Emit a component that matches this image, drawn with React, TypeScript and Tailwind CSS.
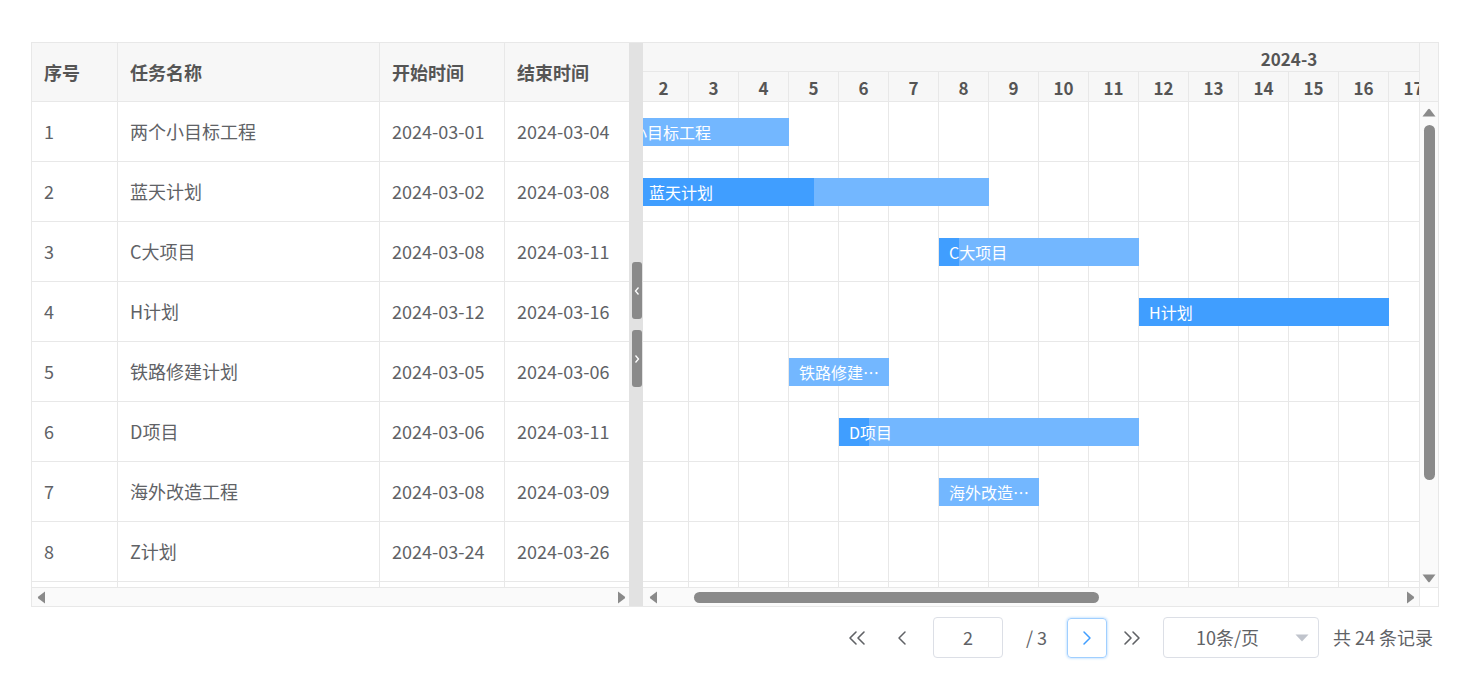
import React from 'react';
import { ChevronLeft, ChevronRight } from 'lucide-react';

interface Task {
  id: number;
  name: string;
  start: string;
  end: string;
  progress: number;
}

const tasks: Task[] = [
  { id: 1, name: '两个小目标工程', start: '2024-03-01', end: '2024-03-04', progress: 0 },
  { id: 2, name: '蓝天计划', start: '2024-03-02', end: '2024-03-08', progress: 50 },
  { id: 3, name: 'C大项目', start: '2024-03-08', end: '2024-03-11', progress: 10 },
  { id: 4, name: 'H计划', start: '2024-03-12', end: '2024-03-16', progress: 100 },
  { id: 5, name: '铁路修建计划', start: '2024-03-05', end: '2024-03-06', progress: 0 },
  { id: 6, name: 'D项目', start: '2024-03-06', end: '2024-03-11', progress: 10 },
  { id: 7, name: '海外改造工程', start: '2024-03-08', end: '2024-03-09', progress: 0 },
  { id: 8, name: 'Z计划', start: '2024-03-24', end: '2024-03-26', progress: 0 },
];

const DAY_W = 50;
const days = Array.from({ length: 31 }, (_, i) => i + 1);
const dayOf = (d: string) => Number(d.slice(8, 10));

const headers = ['序号', '任务名称', '开始时间', '结束时间'];

// small filled triangles used by the fake scrollbars
const Tri: React.FC<{ dir: 'left' | 'right' | 'up' | 'down' }> = ({ dir }) => {
  if (dir === 'left')
    return (
      <svg className="shrink-0" width="9" height="13" viewBox="0 0 9 13">
        <path d="M8 0.5 L1.4 5.6 Q0.3 6.5 1.4 7.4 L8 12.5 Z" fill="#8a8a8a" />
      </svg>
    );
  if (dir === 'right')
    return (
      <svg className="shrink-0" width="9" height="13" viewBox="0 0 9 13">
        <path d="M1 0.5 L7.6 5.6 Q8.7 6.5 7.6 7.4 L1 12.5 Z" fill="#8a8a8a" />
      </svg>
    );
  if (dir === 'up')
    return (
      <svg className="shrink-0" width="14" height="9" viewBox="0 0 14 9">
        <path d="M0.5 8.5 L6.1 1.2 Q7 0.1 7.9 1.2 L13.5 8.5 Z" fill="#8a8a8a" />
      </svg>
    );
  return (
    <svg className="shrink-0" width="14" height="9" viewBox="0 0 14 9">
      <path d="M0.5 0.5 L6.1 7.8 Q7 8.9 7.9 7.8 L13.5 0.5 Z" fill="#8a8a8a" />
    </svg>
  );
};

const DoubleChevron: React.FC<{ dir: 'left' | 'right'; color?: string }> = ({ dir, color = '#606266' }) => (
  <svg width="20" height="16" viewBox="0 0 20 16" fill="none" stroke={color} strokeWidth="1.6" strokeLinecap="round" strokeLinejoin="round">
    {dir === 'left' ? (
      <>
        <path d="M9 2 L3 8 L9 14" />
        <path d="M17 2 L11 8 L17 14" />
      </>
    ) : (
      <>
        <path d="M3 2 L9 8 L3 14" />
        <path d="M11 2 L17 8 L11 14" />
      </>
    )}
  </svg>
);

const GanttBar: React.FC<{ task: Task }> = ({ task }) => {
  const s = dayOf(task.start);
  const e = dayOf(task.end);
  const left = (s - 1) * DAY_W;
  const width = (e - s + 1) * DAY_W;
  return (
    <div
      className="absolute top-[16px] h-[28px] overflow-hidden bg-[#73b7ff]"
      style={{ left, width }}
    >
      <div className="absolute inset-y-0 left-0 bg-[#409eff]" style={{ width: `${task.progress}%` }} />
      <div className="relative truncate pr-[3px] pl-[10px] text-[16px] leading-[28px] text-white">{task.name}</div>
    </div>
  );
};

export default function App() {
  return (
    <div className="min-h-screen bg-white pt-[42px] pl-[31px] font-['Noto_Sans_CJK_SC','Noto_Sans',sans-serif]">
      <div className="flex h-[565px] w-[1408px] border border-[#e8e8e8]">
        {/* Left: task table */}
        <div className="flex w-[597px] flex-col">
          <div className="grid h-[59px] shrink-0 grid-cols-[86px_262px_125px_124px] border-b border-[#e8e8e8] bg-[#f7f7f7] text-[18px] font-bold text-[#555]">
            {headers.map((h, i) => (
              <div key={h} className={i < 3 ? 'flex items-center border-r border-[#e8e8e8] px-3' : 'flex items-center px-3'}>
                {h}
              </div>
            ))}
          </div>
          <div className="h-[485px] shrink-0 overflow-hidden">
            {[...tasks, null].map((t, idx) => (
              <div key={idx} className="grid h-[60px] grid-cols-[86px_262px_125px_124px] border-b border-[#e8e8e8] text-[18px] text-[#606266]">
                <div className="flex items-center border-r border-[#e8e8e8] px-3">{t ? t.id : ''}</div>
                <div className="flex items-center border-r border-[#e8e8e8] px-3">{t ? t.name : ''}</div>
                <div className="flex items-center border-r border-[#e8e8e8] px-3">{t ? t.start : ''}</div>
                <div className="flex items-center pl-3">{t ? t.end : ''}</div>
              </div>
            ))}
          </div>
          <div className="flex h-[19px] shrink-0 items-center justify-between border-t border-[#e8e8e8] bg-[#fafafa] pr-[3px] pl-[5px]">
            <Tri dir="left" />
            <Tri dir="right" />
          </div>
        </div>

        {/* Splitter */}
        <div className="flex w-[14px] shrink-0 flex-col gap-[11px] bg-[#e2e2e2] pt-[219px] pl-[3px]">
          <div className="flex h-[57px] w-[10px] items-center justify-center rounded-[3px] bg-[#8a8a8a]">
            <svg width="6" height="10" viewBox="0 0 6 10" fill="none" stroke="#fff" strokeWidth="1.3">
              <path d="M4.5 1.5 L1.5 5 L4.5 8.5" />
            </svg>
          </div>
          <div className="flex h-[57px] w-[10px] items-center justify-center rounded-[3px] bg-[#8a8a8a]">
            <svg width="6" height="10" viewBox="0 0 6 10" fill="none" stroke="#fff" strokeWidth="1.3">
              <path d="M1.5 1.5 L4.5 5 L1.5 8.5" />
            </svg>
          </div>
        </div>

        {/* Gantt chart */}
        <div className="flex w-[776px] shrink-0 flex-col">
          <div className="h-[59px] shrink-0 overflow-hidden border-b border-[#e8e8e8] bg-[#f7f7f7] font-bold text-[#555]">
            <div className="h-[29px] border-b border-[#e8e8e8] pl-[596px]">
              <div className="w-[100px] text-center text-[17px] leading-[31px]">2024-3</div>
            </div>
            <div className="ml-[-54px] flex h-[29px] w-[1550px]">
              {days.map((d) => (
                <div key={d} className="w-[50px] shrink-0 border-r border-[#e8e8e8] text-center text-[17px] leading-[31px]">
                  {d}
                </div>
              ))}
            </div>
          </div>
          <div className="h-[485px] shrink-0 overflow-hidden">
            <div className="ml-[-54px] w-[1550px]">
              {[...tasks, null].map((t, idx) => (
                <div key={idx} className="relative flex h-[60px] border-b border-[#e8e8e8]">
                  {days.map((d) => (
                    <div key={d} className="w-[50px] shrink-0 border-r border-[#e8e8e8]" />
                  ))}
                  {t && <GanttBar task={t} />}
                </div>
              ))}
            </div>
          </div>
          <div className="flex h-[19px] shrink-0 items-center border-t border-[#e8e8e8] bg-[#fafafa] pl-[6px] pr-[4px]">
            <Tri dir="left" />
            <div className="ml-[36px] h-[11px] w-[405px] rounded-full bg-[#8a8a8a]" />
            <div className="flex-1" />
            <Tri dir="right" />
          </div>
        </div>

        {/* Vertical scrollbar */}
        <div className="flex w-[19px] shrink-0 flex-col border-l border-[#e8e8e8]">
          <div className="h-[59px] shrink-0 border-b border-[#e8e8e8] bg-[#f7f7f7]" />
          <div className="flex h-[485px] shrink-0 flex-col items-center bg-[#fafafa] pt-[6px]">
            <Tri dir="up" />
            <div className="mt-[8px] h-[355px] w-[11px] rounded-full bg-[#8a8a8a]" />
            <div className="flex-1" />
            <div className="mb-[4px] flex">
              <Tri dir="down" />
            </div>
          </div>
          <div className="h-[19px] shrink-0 border-t border-[#e8e8e8]" />
        </div>
      </div>

      {/* Pagination */}
      <div className="mt-[10px] flex h-[41px] items-center pl-[806px] text-[18px] text-[#606266]">
        <button className="flex h-[41px] w-[40px] items-center justify-center">
          <DoubleChevron dir="left" />
        </button>
        <button className="ml-[5px] flex h-[41px] w-[40px] items-center justify-center">
          <ChevronLeft size={24} strokeWidth={1.5} color="#606266" />
        </button>
        <div className="ml-[11px] flex h-[41px] w-[70px] items-center justify-center rounded-[4px] border border-[#dcdfe6]">
          2
        </div>
        <span className="ml-[23px] w-[22px]">/ 3</span>
        <button className="ml-[19px] flex h-[40px] w-[40px] items-center justify-center rounded-[4px] border border-[#a0cfff] shadow-[0_0_3px_#a0cfff]">
          <ChevronRight size={24} strokeWidth={1.5} color="#409eff" />
        </button>
        <button className="ml-[5px] flex h-[41px] w-[40px] items-center justify-center">
          <DoubleChevron dir="right" />
        </button>
        <div className="ml-[11px] flex h-[41px] w-[156px] items-center rounded-[4px] border border-[#dcdfe6] pl-[32px] pr-[9px]">
          <span className="flex-1">10条/页</span>
          <svg width="14" height="8" viewBox="0 0 14 8">
            <path d="M0.5 0.5 L13.5 0.5 L7 7.5 Z" fill="#c0c4cc" />
          </svg>
        </div>
        <span className="ml-[14px] text-[#606266]">共 24 条记录</span>
      </div>
    </div>
  );
}
